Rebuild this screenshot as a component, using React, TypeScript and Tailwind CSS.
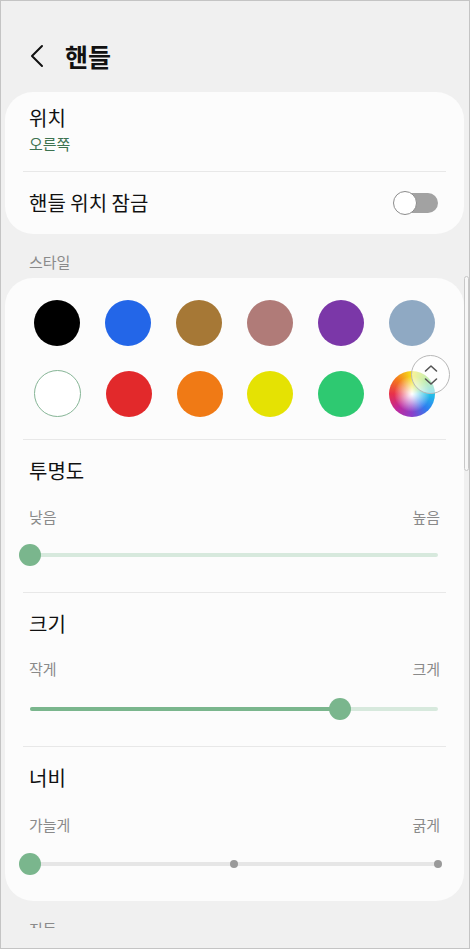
import React from "react";

const font = { fontFamily: '"Noto Sans CJK KR", "Noto Sans", sans-serif' };

function Divider() {
  return <div className="mx-[18px] h-px bg-[#e8e8e8]" />;
}

function SliderSection({
  title,
  left,
  right,
  kind,
  labelsMt,
  sliderMt,
}: {
  title: string;
  left: string;
  right: string;
  kind: "opacity" | "size" | "width";
  labelsMt: string;
  sliderMt: string;
}) {
  return (
    <div className="px-[24px] pt-[18px]">
      <div className="text-[20px] leading-[26px] text-[#111]">{title}</div>
      <div className={`${labelsMt} flex justify-between text-[15px] leading-[20px] text-[#8a8a8a]`}>
        <span>{left}</span>
        <span>{right}</span>
      </div>
      <div className={`${sliderMt} ml-[1px] mr-[2px] h-[24px] relative`}>
        {kind === "opacity" && (
          <>
            <div className="absolute left-0 right-0 top-1/2 -translate-y-1/2 h-[4px] rounded-full bg-[#d7e9dd]" />
            <div className="absolute top-1/2 -translate-y-1/2 -translate-x-1/2 left-0 w-[22px] h-[22px] rounded-full bg-[#7ab68d]" />
          </>
        )}
        {kind === "size" && (
          <>
            <div className="absolute left-0 right-0 top-1/2 -translate-y-1/2 h-[4px] rounded-full bg-[#d7e9dd]" />
            <div className="absolute left-0 top-1/2 -translate-y-1/2 h-[4px] rounded-full bg-[#7ab68d]" style={{ width: "76%" }} />
            <div className="absolute top-1/2 -translate-y-1/2 -translate-x-1/2 w-[22px] h-[22px] rounded-full bg-[#7ab68d]" style={{ left: "76%" }} />
          </>
        )}
        {kind === "width" && (
          <>
            <div className="absolute left-0 right-0 top-1/2 -translate-y-1/2 h-[4px] rounded-full bg-[#e6e6e6]" />
            <div className="absolute top-1/2 -translate-y-1/2 -translate-x-1/2 w-[8px] h-[8px] rounded-full bg-[#9a9a9a]" style={{ left: "50%" }} />
            <div className="absolute top-1/2 -translate-y-1/2 -translate-x-1/2 w-[8px] h-[8px] rounded-full bg-[#9a9a9a]" style={{ left: "100%" }} />
            <div className="absolute top-1/2 -translate-y-1/2 -translate-x-1/2 left-0 w-[22px] h-[22px] rounded-full bg-[#7ab68d]" />
          </>
        )}
      </div>
    </div>
  );
}

const row1 = ["#000000", "#2366e8", "#a67836", "#b07b78", "#7b37a8", "#8fa9c3"];
const row2 = ["white", "#e2292b", "#f07a15", "#e5e203", "#2ec971", "wheel"];

function Swatch({ c }: { c: string }) {
  if (c === "white")
    return <div className="w-[47px] h-[47px] rounded-full bg-white border-[1.5px] border-[#86b596]" />;
  if (c === "wheel")
    return (
      <div className="w-[46px] h-[46px] rounded-full bg-[radial-gradient(circle,#ffffff_0%,rgba(255,255,255,0.8)_12%,rgba(255,255,255,0)_55%),conic-gradient(#f5e51a,#7ed957,#22c1e8,#2d7df0,#8b3fc9,#c0289a,#e8304a,#f47a1c,#f5e51a)]" />
    );
  return <div className="w-[46px] h-[46px] rounded-full" style={{ backgroundColor: c }} />;
}

export default function App() {
  return (
    <div
      className="w-[470px] h-[949px] bg-[#f0f0f0] border border-[#c4c4c4] flex flex-col overflow-hidden relative"
      style={font}
    >
      <div className="h-[927px] overflow-hidden shrink-0">
        {/* header */}
        <div className="h-[91px] flex items-center pl-[29px] pt-[18px]">
          <svg width="16" height="24" viewBox="0 0 16 24" fill="none" className="mr-[19px]">
            <path d="M12 2 L2 12 L12 22" stroke="#111" strokeWidth="2" strokeLinecap="round" strokeLinejoin="round" />
          </svg>
          <span className="text-[25px] leading-[30px] font-bold text-[#111]">핸들</span>
        </div>

        {/* card 1 */}
        <div className="ml-[4px] mr-[5px] bg-[#fcfcfc] rounded-[28px]">
          <div className="px-[24px] pt-[13px] pb-[17px]">
            <div className="text-[20px] leading-[26px] text-[#111]">위치</div>
            <div className="mt-[3px] text-[15px] leading-[20px] text-[#3d7350]">오른쪽</div>
          </div>
          <Divider />
          <div className="h-[62px] px-[24px] flex items-center justify-between">
            <span className="text-[20px] leading-[26px] text-[#111]">핸들 위치 잠금</span>
            <div className="relative w-[45px] h-[24px] mr-[2px]">
              <div className="absolute right-0 top-[2px] w-[38px] h-[20px] rounded-full bg-[#a2a2a2]" />
              <div className="absolute left-0 top-0 w-[24px] h-[24px] rounded-full bg-white border-[1.5px] border-[#8c8c8c]" />
            </div>
          </div>
        </div>

        {/* section header */}
        <div className="px-[28px] pt-[18px] pb-[6px] text-[15px] leading-[20px] text-[#8a8a8a]">스타일</div>

        {/* card 2 */}
        <div className="ml-[4px] mr-[5px] bg-[#fcfcfc] rounded-[28px] pb-[25px] relative">
          <div className="px-[29px] pt-[22px] pb-[22px] flex flex-col gap-[24px]">
            <div className="flex justify-between">
              {row1.map((c) => (
                <Swatch key={c} c={c} />
              ))}
            </div>
            <div className="flex justify-between items-center">
              {row2.map((c) => (
                <Swatch key={c} c={c} />
              ))}
            </div>
          </div>
          {/* expand button overlay */}
          <div className="absolute left-[406px] top-[77px] w-[39px] h-[39px] rounded-full border border-[#b8b8b8] bg-[rgba(255,255,255,0.55)] flex items-center justify-center">
            <svg width="16" height="24" viewBox="0 0 16 24" fill="none">
              <path d="M2.5 8 L8 3 L13.5 8" stroke="#555" strokeWidth="1.6" strokeLinecap="round" strokeLinejoin="round" />
              <path d="M2.5 16 L8 21 L13.5 16" stroke="#555" strokeWidth="1.6" strokeLinecap="round" strokeLinejoin="round" />
            </svg>
          </div>
          <Divider />
          <div className="pb-[25px]">
            <SliderSection title="투명도" left="낮음" right="높음" kind="opacity" labelsMt="mt-[23px]" sliderMt="mt-[16px]" />
          </div>
          <Divider />
          <div className="pb-[25px]">
            <SliderSection title="크기" left="작게" right="크게" kind="size" labelsMt="mt-[22px]" sliderMt="mt-[18px]" />
          </div>
          <Divider />
          <SliderSection title="너비" left="가늘게" right="굵게" kind="width" labelsMt="mt-[24px]" sliderMt="mt-[17px]" />
        </div>

        <div className="px-[28px] pt-[18px] text-[15px] leading-[20px] text-[#8a8a8a]">진동</div>
      </div>
      <div className="flex-1 bg-[#f0f0f0]" />

      {/* scrollbar */}
      <div className="absolute left-[463px] top-[275px] w-[5px] h-[195px] rounded-[3px] border border-[#c8c8c8] bg-[#f7f7f7]" />
    </div>
  );
}
